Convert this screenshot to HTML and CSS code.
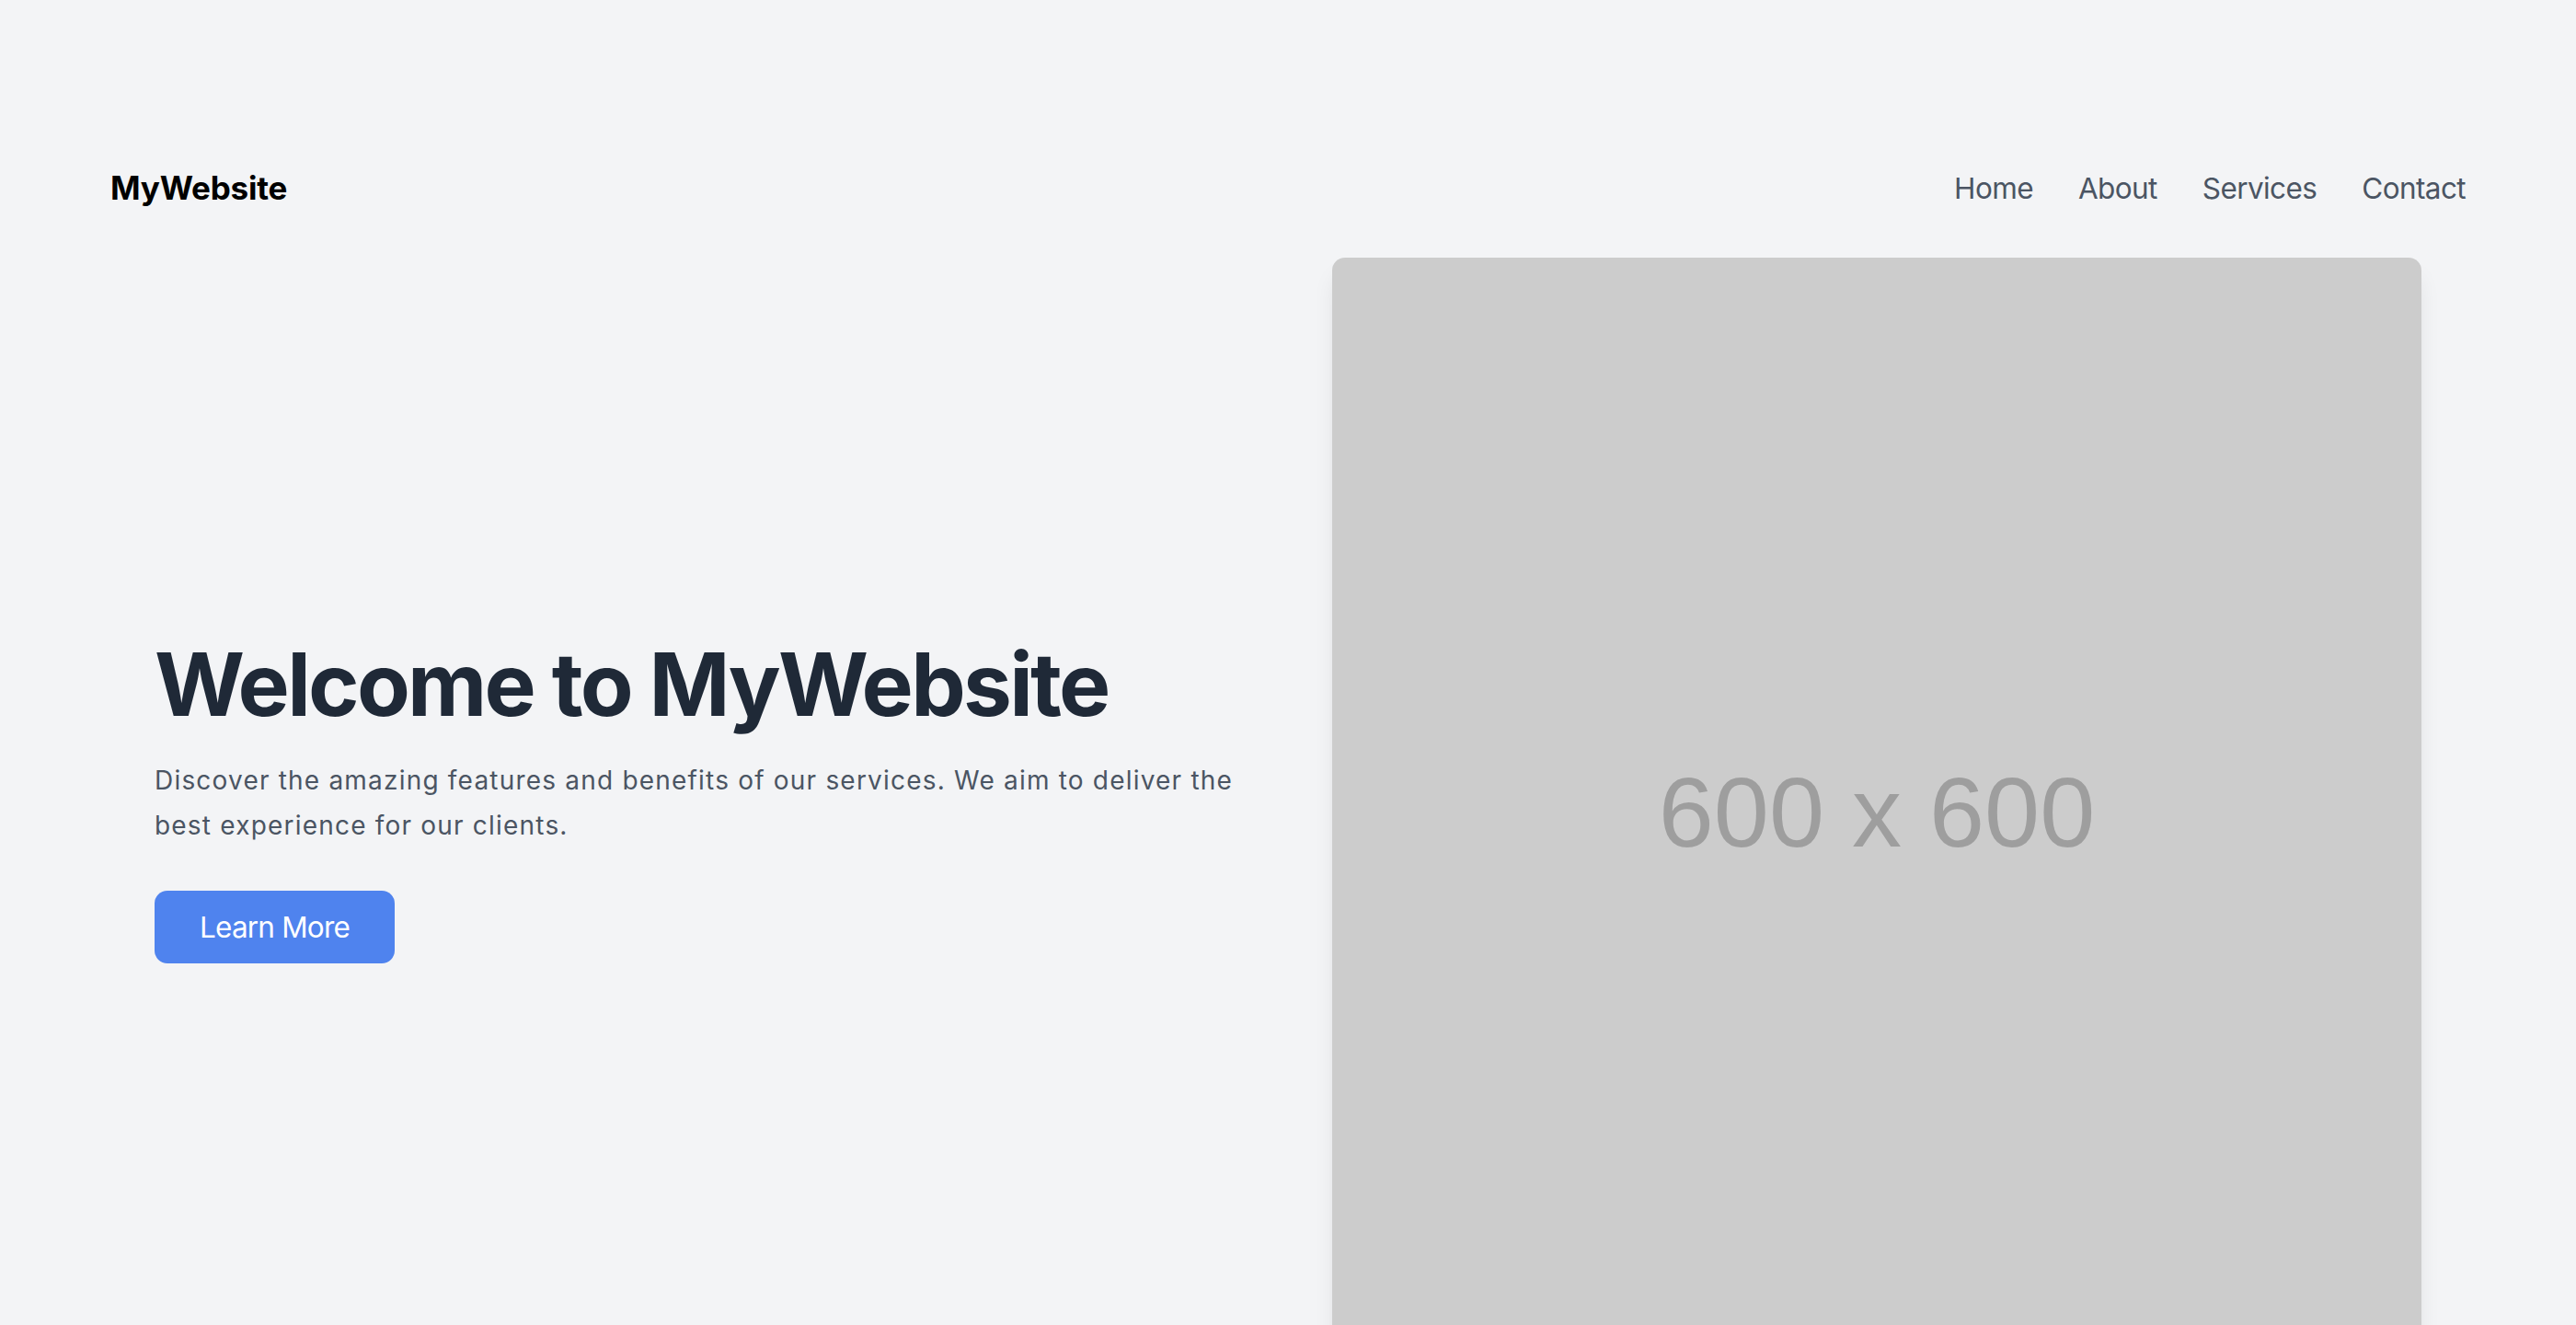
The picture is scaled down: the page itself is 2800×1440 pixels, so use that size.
FILE: index.html
```html
<!DOCTYPE html>
<html lang="en">
<head>
<meta charset="utf-8">
<title>MyWebsite</title>
<link rel="stylesheet" href="styles.css">
</head>
<body>
<div class="page">
  <header class="header">
    <div class="logo">MyWebsite</div>
    <nav class="nav">
      <a href="#">Home</a>
      <a href="#">About</a>
      <a href="#">Services</a>
      <a href="#">Contact</a>
    </nav>
  </header>
  <main class="hero">
    <section class="hero-text">
      <h1 class="title">Welcome to MyWebsite</h1>
      <p class="lead">Discover the amazing features and benefits of our services. We aim to deliver the best experience for our clients.</p>
      <a class="btn" href="#">Learn More</a>
    </section>
    <section class="hero-media">
      <div class="placeholder"><span>600 x 600</span></div>
    </section>
  </main>
</div>
</body>
</html>
```
FILE: styles.css
```css
* { box-sizing: border-box; }
html, body { margin: 0; padding: 0; }
body {
  background: #f3f4f6;
  font-family: Inter, "Noto Sans", sans-serif;
  color: #1f2937;
}
.page {
  padding: 0 120px;
}
.header {
  display: flex;
  justify-content: space-between;
  align-items: center;
  height: 76px;
  margin-top: 166px;
}
.logo {
  font-size: 35px;
  font-weight: 700;
  letter-spacing: -0.2px;
  color: #000;
}
.nav {
  display: flex;
  gap: 49px;
}
.nav a {
  font-size: 31.5px;
  letter-spacing: -0.6px;
  color: #4b5563;
  text-decoration: none;
}
.hero {
  display: grid;
  grid-template-columns: 1fr 1fr;
  align-items: center;
  margin-top: 38px;
}
.hero-text {
  padding: 0 48px;
}
.title {
  margin: 0 0 32px;
  font-size: 94.5px;
  line-height: 1;
  font-weight: 700;
  letter-spacing: -0.029em;
  color: #1f2937;
}
.lead {
  margin: 0 0 46px;
  font-size: 28px;
  line-height: 49px;
  letter-spacing: 1.2px;
  color: #4b5563;
}
.btn {
  display: inline-block;
  background: #4f83ee;
  color: #fff;
  font-size: 31.5px;
  line-height: 47px;
  letter-spacing: -0.8px;
  padding: 16px 49px;
  border-radius: 14px;
  text-decoration: none;
}
.hero-media {
  padding: 0 48px;
}
.placeholder {
  width: 100%;
  aspect-ratio: 1 / 1;
  background: #cccccc;
  border-radius: 14px;
  box-shadow: 0 17px 26px -5px rgba(0,0,0,0.1), 0 7px 10px -7px rgba(0,0,0,0.1);
  display: flex;
  align-items: center;
  justify-content: center;
  padding-top: 20px;
}
.placeholder span {
  font-family: "Liberation Sans", Arial, sans-serif;
  font-size: 108px;
  color: #9e9e9e;
}
```
